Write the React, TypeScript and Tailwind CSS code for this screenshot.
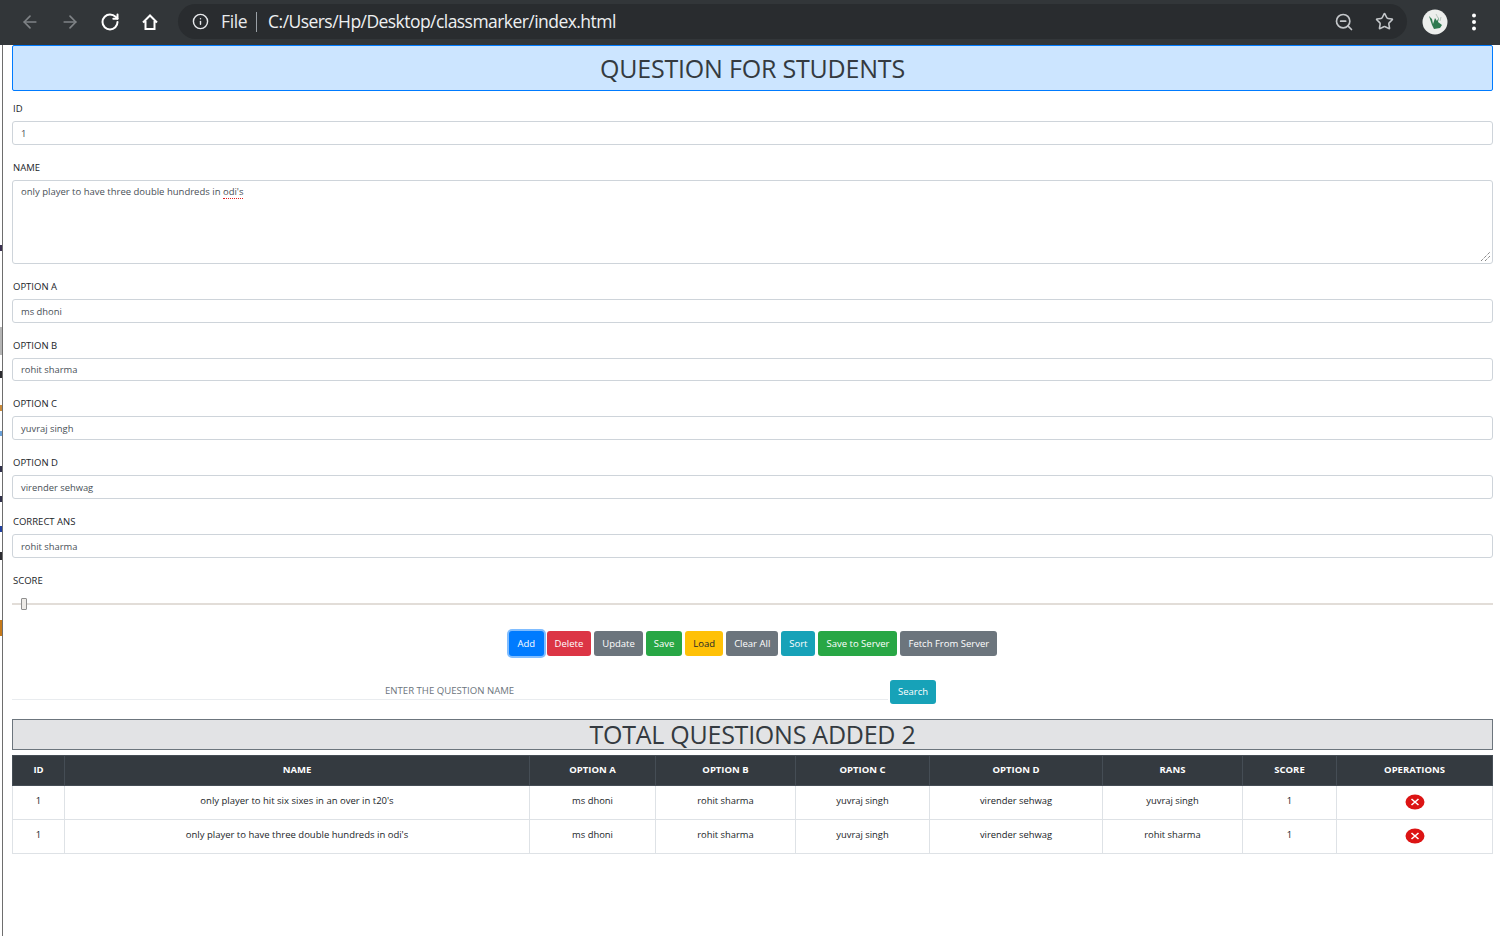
import React from "react";
import { ArrowLeft, ArrowRight, RotateCw, Info, ZoomOut, Star } from "lucide-react";

function Field({ label, value }: { label: string; value: string }) {
  return (
    <div className="mb-[17px]">
      <div className="h-[18px] text-[9.5px] leading-[11px] pl-px text-[#212529]">{label}</div>
      <div className="h-[23.75px] pt-[2px] border border-[#ced4da] rounded-[3px] bg-white flex items-center pl-2 text-[9.4px] text-[#495057]">
        {value}
      </div>
    </div>
  );
}

const buttons: [string, string][] = [
  ["Delete", "bg-[#dc3545] text-white"],
  ["Update", "bg-[#6c757d] text-white"],
  ["Save", "bg-[#28a745] text-white"],
  ["Load", "bg-[#ffc107] text-[#212529]"],
  ["Clear All", "bg-[#6c757d] text-white"],
  ["Sort", "bg-[#17a2b8] text-white"],
  ["Save to Server", "bg-[#28a745] text-white"],
  ["Fetch From Server", "bg-[#6c757d] text-white"],
];

const headers = ["ID", "NAME", "OPTION A", "OPTION B", "OPTION C", "OPTION D", "RANS", "SCORE", "OPERATIONS"];
const rows = [
  ["1", "only player to hit six sixes in an over in t20's", "ms dhoni", "rohit sharma", "yuvraj singh", "virender sehwag", "yuvraj singh", "1"],
  ["1", "only player to have three double hundreds in odi's", "ms dhoni", "rohit sharma", "yuvraj singh", "virender sehwag", "rohit sharma", "1"],
];

const strip: [string, string][] = [
  ["h-[200px]", "bg-white"],
  ["h-[6px]", "bg-[#3a3050]"],
  ["h-[76px]", "bg-white"],
  ["h-[28px]", "bg-[#b5b5b5]"],
  ["h-[16px]", "bg-white"],
  ["h-[7px]", "bg-[#2c2c30]"],
  ["h-[27px]", "bg-white"],
  ["h-[6px]", "bg-[#c98a3a]"],
  ["h-[20px]", "bg-white"],
  ["h-[5px]", "bg-[#6aa0d8]"],
  ["h-[30px]", "bg-white"],
  ["h-[6px]", "bg-[#30304a]"],
  ["h-[24px]", "bg-white"],
  ["h-[6px]", "bg-[#30304a]"],
  ["h-[24px]", "bg-white"],
  ["h-[6px]", "bg-[#2040a0]"],
  ["h-[20px]", "bg-white"],
  ["h-[8px]", "bg-[#2c2c30]"],
  ["h-[60px]", "bg-white"],
  ["h-[16px]", "bg-[#c77a1a]"],
];

function DeleteIcon() {
  return (
    <svg width="20" height="16" viewBox="0 0 20 16" className="block mx-auto">
      <ellipse cx="10" cy="8" rx="9.5" ry="7.5" fill="#dc1414" />
      <path d="M6.5 5 L13.5 11 M13.5 5 L6.5 11" stroke="#fff" strokeWidth="1.6" />
    </svg>
  );
}

export default function App() {
  return (
    <div className="w-[1500px] h-[936px] overflow-hidden bg-white flex flex-col font-['Open_Sans','Noto_Sans',sans-serif]">
      <div className="h-[45px] shrink-0 bg-[#323639] flex items-center text-[#e8eaed] pb-[2px]">
        <div className="w-[178px] shrink-0 pl-[20px] flex items-center gap-[20px]">
          <ArrowLeft size={20} strokeWidth={2} className="text-[#7f8386]" />
          <ArrowRight size={20} strokeWidth={2} className="text-[#7f8386]" />
          <RotateCw size={20} strokeWidth={2.4} className="text-white" />
          <svg width="20" height="20" viewBox="0 0 20 20" fill="none" stroke="#fff" strokeWidth="2">
            <path d="M3 10.5 L10 3.5 L17 10.5 M5.5 9 V17 H14.5 V9" />
          </svg>
        </div>
        <div className="w-[1229px] h-[35px] rounded-full bg-[#292c2f] flex items-center pl-[14px] pr-[13px]">
          <Info size={17} strokeWidth={2} className="text-[#e8eaed]" />
          <span className="ml-[12px] text-[17.5px] tracking-[-0.4px]">File</span>
          <span className="ml-[9px] w-px h-[20px] bg-[#9aa0a6]" />
          <span className="ml-[11px] text-[17.5px] tracking-[-0.55px] text-[#eef0f2]">C:/Users/Hp/Desktop/classmarker/index.html</span>
          <ZoomOut size={20} strokeWidth={2} className="ml-auto mr-[2px] text-[#c4c7ca]" />
          <Star size={19} strokeWidth={2} className="ml-[19px] text-[#c4c7ca]" />
        </div>
        <svg width="26" height="26" viewBox="0 0 26 26" className="ml-[15px] shrink-0">
          <circle cx="13" cy="13" r="12.5" fill="#eceeec" />
          <path d="M7 7 L10 10 L11 15 L13 9 L15 12 L17 8 L16 13 L20 16 L18 19 L12 20 L10 16 Z" fill="#2f7a50" />
          <path d="M14 5 L16 9 M19 8 L18 12" stroke="#b8c4bc" strokeWidth="1" />
        </svg>
        <svg width="6" height="18" viewBox="0 0 6 18" className="ml-[23px] shrink-0" fill="#fff">
          <circle cx="3" cy="2.5" r="2" />
          <circle cx="3" cy="9" r="2" />
          <circle cx="3" cy="15.5" r="2" />
        </svg>
      </div>

      <div className="flex-1 flex min-h-0">
        <div className="w-[3px] shrink-0 flex flex-col border-r border-r-[#6e6e6e] bg-white">
          {strip.map(([h, c], i) => (
            <div key={i} className={"shrink-0 " + h + " " + c} />
          ))}
        </div>

        <div className="w-[1490px] pl-[9px]">
          <div className="h-[46px] pt-[2px] border border-[#007bff] rounded-[2px] bg-[#cce5ff] flex items-center justify-center text-[25px] tracking-[-0.2px] text-[#343a40] mb-[12px]">
            QUESTION FOR STUDENTS
          </div>

          <Field label="ID" value="1" />

          <div className="mb-[17px]">
            <div className="h-[18px] text-[9.5px] leading-[11px] pl-px text-[#212529]">NAME</div>
            <div className="relative h-[84px] border border-[#ced4da] rounded-[3px] pl-2 pt-[4px] text-[9.5px] text-[#495057]">
              only player to have three double hundreds in{" "}
              <span className="border-b border-dotted border-[#e02020]">odi's</span>
              <svg width="11" height="11" viewBox="0 0 11 11" className="absolute right-[1px] bottom-[1px]" stroke="#555" strokeWidth="1" strokeDasharray="1 1">
                <path d="M1 10 L10 1 M5 10 L10 5" />
              </svg>
            </div>
          </div>

          <Field label="OPTION A" value="ms dhoni" />
          <Field label="OPTION B" value="rohit sharma" />
          <Field label="OPTION C" value="yuvraj singh" />
          <Field label="OPTION D" value="virender sehwag" />
          <Field label="CORRECT ANS" value="rohit sharma" />

          <div className="h-[18px] text-[9.5px] leading-[11px] pl-px text-[#212529]">SCORE</div>
          <div className="relative h-[12px] mt-[5px] flex items-center">
            <div className="w-full h-[2px] bg-[#e2ddd8]" />
            <div className="absolute left-[9px] top-0 w-[6px] h-[12px] border border-[#8f8f8f] rounded-[1px] bg-[#eeebe7]" />
          </div>

          <div className="mt-[21px] flex justify-center gap-[3px] text-[9.5px] pl-px">
            <div className="h-[25px] pt-[2px] px-[8.5px] rounded-[3px] bg-[#007bff] text-white flex items-center shadow-[0_0_0_2px_#80bdff]">Add</div>
            {buttons.map(([t, c]) => (
              <div key={t} className={"h-[25px] pt-[2px] px-[8px] rounded-[3px] flex items-center " + c}>{t}</div>
            ))}
          </div>

          <div className="mt-[24px] flex items-start">
            <div className="w-[876px] h-[20px] pl-[373px] text-[9.6px] text-[#6c757d] leading-[21px] border-b border-[#e9ecef]">
              ENTER THE QUESTION NAME
            </div>
            <div className="ml-[2px] h-[24px] pt-[2px] px-[8px] rounded-[3px] bg-[#17a2b8] text-white text-[9.5px] flex items-center">Search</div>
          </div>

          <div className="mt-[15px] h-[31px] pt-[2px] border border-[#6c757d] bg-[#e2e3e5] flex items-center justify-center text-[25px] tracking-[-0.25px] text-[#343a40]">
            TOTAL QUESTIONS ADDED 2
          </div>

          <table className="mt-[5px] w-[1480px] table-fixed border-collapse text-[9.4px] text-[#212529]">
            <colgroup>
              <col className="w-[52px]" />
              <col className="w-[465px]" />
              <col className="w-[126px]" />
              <col className="w-[140px]" />
              <col className="w-[134px]" />
              <col className="w-[173px]" />
              <col className="w-[140px]" />
              <col className="w-[94px]" />
              <col className="w-[156px]" />
            </colgroup>
            <thead>
              <tr className="h-[30px] bg-[#343a40] text-white">
                {headers.map((h) => (
                  <th key={h} className="border border-[#454d55] font-bold text-center p-0 text-[9.5px]">{h}</th>
                ))}
              </tr>
            </thead>
            <tbody>
              {rows.map((r, i) => (
                <tr key={i} className="h-[34px]">
                  {r.map((c, j) => (
                    <td key={j} className={j === 1 ? "border border-[#dee2e6] text-center align-top p-0 pt-[8px] text-[9.5px]" : "border border-[#dee2e6] text-center align-top p-0 pt-[8px]"}>{c}</td>
                  ))}
                  <td className="border border-[#dee2e6] align-top p-0 pt-[8px]"><DeleteIcon /></td>
                </tr>
              ))}
            </tbody>
          </table>
        </div>
      </div>
    </div>
  );
}
